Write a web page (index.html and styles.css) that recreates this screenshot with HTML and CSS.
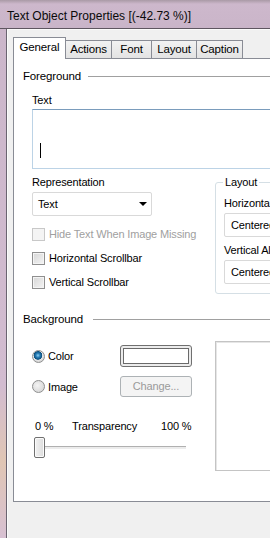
FILE: index.html
```html
<!DOCTYPE html>
<html lang="en">
<head>
  <meta charset="UTF-8">
  <meta name="viewport" content="width=device-width, initial-scale=1.0">
  <title>Text Object Properties</title>
  <link rel="stylesheet" href="styles.css">
</head>
<body>
  <div class="window">
    <div class="titlebar">Text Object Properties [(-42.73 %)]</div>
    <div class="frame">
      <div class="glass-edge"></div>
      <div class="client">
        <!-- Tabs -->
        <div class="tabs">
          <div class="tab active">General</div>
          <div class="tab tab-actions">Actions</div>
          <div class="tab tab-font">Font</div>
          <div class="tab tab-layout">Layout</div>
          <div class="tab tab-caption">Caption</div>
        </div>
        <div class="panel">
          <!-- Foreground -->
          <div class="section-head"><span>Foreground</span><div class="rule"></div></div>
          <div class="section-body">
            <div class="label">Text</div>
            <div class="textbox"><span class="caret"></span></div>
            <div class="split">
              <div class="col-left">
                <div class="label rep-label">Representation</div>
                <div class="combo"><span>Text</span><span class="arrow"></span></div>
                <div class="check-row first disabled"><span class="box"></span>Hide Text When Image Missing</div>
                <div class="check-row"><span class="box"></span>Horizontal Scrollbar</div>
                <div class="check-row"><span class="box"></span>Vertical Scrollbar</div>
              </div>
              <fieldset class="group">
                <legend>Layout</legend>
                <div class="label group-label">Horizontal Alignment</div>
                <div class="combo wide"><span>Centered</span></div>
                <div class="label group-label">Vertical Alignment</div>
                <div class="combo wide"><span>Centered</span></div>
              </fieldset>
            </div>
          </div>

          <!-- Background -->
          <div class="section-head bg-head"><span>Background</span><div class="rule"></div></div>
          <div class="section-body bg-body">
            <div class="col-left">
              <div class="radio-row color-row">
                <span class="radio checked"></span><span class="radio-text">Color</span>
                <div class="color-btn"><div class="swatch"></div></div>
              </div>
              <div class="radio-row image-row">
                <span class="radio"></span><span class="radio-text">Image</span>
                <div class="change-btn">Change...</div>
              </div>
              <div class="scale">
                <span class="zero">0 %</span>
                <span class="mid">Transparency</span>
                <span class="hundred">100 %</span>
              </div>
              <div class="slider"><div class="thumb"></div><div class="track"></div></div>
            </div>
            <div class="preview"></div>
          </div>
        </div>
      </div>
    </div>
  </div>
</body>
</html>
```

FILE: styles.css
```css
body {
  margin: 0;
  width: 270px;
  height: 538px;
  overflow: hidden;
  background-color: #f0f0f0;
  font-family: 'Liberation Sans', Arial, sans-serif;
  font-size: 11px;
  letter-spacing: -0.15px;
  color: #000;
}

.window {
  display: flex;
  flex-direction: column;
  height: 538px;
}

/* Title bar (aero glass) */
.titlebar {
  height: 29px;
  box-sizing: border-box;
  padding: 9px 0 0 7px;
  font-size: 12px;
  letter-spacing: 0;
  line-height: 14px;
  color: #0a0a0a;
  background: linear-gradient(180deg, #a99aa6 0px, #cdb8cc 4px, #cbb6ca 20px, #c9b4c8 29px);
  border-bottom: 1px solid #5e5660;
  white-space: nowrap;
}

.frame {
  flex: 1;
  display: flex;
  min-width: 0;
}

.glass-edge {
  flex: none;
  width: 6px;
  background: linear-gradient(180deg, #cbb6ca 0%, #d2bcd0 70%, #e0c6b4 85%, #d7c0d2 100%);
  border-right: 1px solid #6a6470;
}

.client {
  flex: none;
  width: 320px;
  padding: 8px 0 0 6px;
  box-shadow: inset 1px 1px 0 #fbfbfb;
}

/* Tabs */
.tabs {
  display: flex;
  align-items: flex-end;
  height: 21px;
  position: relative;
  z-index: 1;
}
.tab {
  box-sizing: border-box;
  height: 18px;
  border: 1px solid #898c95;
  border-bottom: none;
  border-left: none;
  background: linear-gradient(180deg, #f2f2f2, #e3e3e3);
  text-align: center;
  line-height: 17px;
  font-size: 11.5px;
}
.tab.active {
  width: 53px;
  height: 22px;
  background: #fff;
  border-left: 1px solid #898c95;
  line-height: 19px;
  margin-bottom: -1px;
}
.tab-actions { width: 46px; }
.tab-font { width: 40px; }
.tab-layout { width: 45px; }
.tab-caption { width: 46px; }

.panel {
  width: 300px;
  height: 444px;
  box-sizing: border-box;
  background: #fff;
  border: 1px solid #898c95;
  padding: 9px 0 0 9px;
}

/* Section header with rule */
.section-head {
  display: flex;
  align-items: center;
  height: 16px;
  font-size: 11.5px;
}
.section-head .rule {
  flex: 1;
  height: 1px;
  background: #a0a0a0;
  margin-left: 7px;
}
.bg-head { margin-top: 17px; }
.bg-head .rule { margin-left: 10px; }

.section-body {
  padding-left: 9px;
}

.label {
  height: 16px;
  line-height: 16px;
  margin-top: 8px;
  white-space: nowrap;
}

.textbox {
  box-sizing: border-box;
  height: 60px;
  margin-top: 1px;
  border: 1px solid #bcd3e6;
  border-top-color: #7a9cbc;
  padding: 33px 0 0 7px;
}
.caret {
  display: block;
  width: 1px;
  height: 15px;
  background: #000;
}

.split {
  display: flex;
}
.col-left {
  width: 183px;
  flex: none;
}
.rep-label { margin-top: 5px; }

.combo {
  box-sizing: border-box;
  width: 120px;
  height: 24px;
  margin-top: 2px;
  border: 1px solid #d9d9d9;
  border-radius: 2px;
  background: #fff;
  display: flex;
  align-items: center;
  padding-left: 5px;
  white-space: nowrap;
}
.combo span:first-child { flex: 1; }
.combo .arrow {
  width: 0;
  height: 0;
  border-left: 4px solid transparent;
  border-right: 4px solid transparent;
  border-top: 4px solid #000;
  margin-right: 4px;
}
.combo.wide { width: 80px; padding-left: 6px; }

.check-row {
  display: flex;
  align-items: center;
  height: 24px;
  white-space: nowrap;
}
.check-row.first { margin-top: 6px; }
.check-row .box {
  box-sizing: border-box;
  width: 13px;
  height: 13px;
  margin-right: 4px;
  border: 1px solid #8f8f8f;
  background: linear-gradient(135deg, #d6d6d6, #f4f4f4);
  box-shadow: inset 0 0 0 1px #f4f4f4;
}
.check-row.disabled { color: #a0a0a0; }
.check-row.disabled .box {
  border-color: #c8c8c8;
  background: #f4f4f4;
}

/* Layout group box */
.group {
  flex: 1;
  margin: 0;
  padding: 0 0 10px 8px;
  border: 1px solid #d5dfe5;
  border-radius: 3px;
  min-width: 0;
  height: 120px;
  box-sizing: border-box;
  margin-top: 5px;
}
.group legend {
  margin-left: -1px;
  padding: 0 2px;
  height: 16px;
  line-height: 16px;
}
.group-label { margin-top: 5px; }
.group .combo { margin-top: 2px; }

/* Background */
.bg-body {
  display: flex;
}
.radio-row {
  display: flex;
  align-items: center;
}
.color-row { margin-top: 18px; height: 22px; }
.image-row { margin-top: 9px; height: 21px; }
.radio {
  box-sizing: border-box;
  width: 13px;
  height: 13px;
  border-radius: 50%;
  border: 1px solid #8e8f8f;
  background: radial-gradient(circle at 40% 40%, #f4f4f4, #cfcfcf);
  margin-right: 3px;
}
.radio.checked {
  background: radial-gradient(circle at 45% 40%, #8fd4f5 0, #2a7fb8 2px, #0b4f7d 4px, #e8e8e8 4.6px, #d8d8d8 6px);
}
.radio-text { width: 72px; }
.color-btn {
  box-sizing: border-box;
  width: 72px;
  height: 22px;
  border: 1px solid #707070;
  border-radius: 3px;
  background: #ececec;
  padding: 2px;
}
.swatch {
  height: 100%;
  box-sizing: border-box;
  border: 1px solid #6a6a6a;
  background: #fff;
}
.change-btn {
  box-sizing: border-box;
  width: 72px;
  height: 21px;
  border: 1px solid #adb2b5;
  border-radius: 3px;
  background: #f4f4f4;
  color: #9a9a9a;
  text-align: center;
  line-height: 19px;
}

.scale {
  height: 16px;
  line-height: 16px;
  margin-top: 21px;
  display: flex;
  white-space: nowrap;
}
.scale .zero { margin-left: 3px; width: 37px; }
.scale .mid { width: 89px; }

.slider {
  display: flex;
  align-items: center;
  margin-top: 3px;
  margin-left: 2px;
  height: 21px;
}
.thumb {
  box-sizing: border-box;
  width: 11px;
  height: 21px;
  border: 1px solid #707070;
  border-radius: 2px;
  background: linear-gradient(90deg, #f2f2f2, #dcdcdc);
  box-shadow: inset 0 0 0 1px #fbfbfb;
}
.track {
  width: 141px;
  height: 1px;
  background: #b0b0b0;
  border-bottom: 2px solid #ececec;
}

.preview {
  flex: 1;
  margin-top: 14px;
  height: 130px;
  box-sizing: border-box;
  border: 1px solid #c4c4c4;
  box-shadow: inset 1px 1px 0 #e6e6e6;
}
```
